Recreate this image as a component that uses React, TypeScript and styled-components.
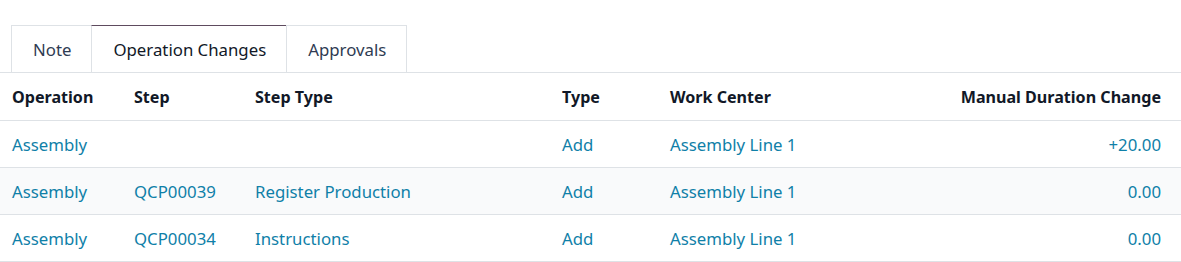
import React from "react";
import styled, { createGlobalStyle } from "styled-components";

const Global = createGlobalStyle`
  html, body { margin: 0; padding: 0; background: #fff; }
  body { font-family: "Noto Sans", "Open Sans", sans-serif; }
`;

const Page = styled.div`
  padding-top: 25px;
  width: 1181px;
`;

const TabList = styled.div`
  display: flex;
  padding-left: 11px;
  border-bottom: 1px solid #dee2e6;
`;

const Tab = styled.div<{ $active?: boolean }>`
  height: 46px;
  padding: 0 20px 0 21px;
  display: flex;
  align-items: center;
  font-size: 16.8px;
  color: ${(p) => (p.$active ? "#111827" : "#2f3b52")};
  border: 1px solid #dee2e6;
  border-top: 1px solid ${(p) => (p.$active ? "#5e4b5f" : "#dee2e6")};
  margin-left: -1px;
  margin-bottom: -1px;
  background: #fff;
  &:first-child { margin-left: 0; }
`;

const Table = styled.table`
  width: 1181px;
  border-collapse: collapse;
  table-layout: fixed;
  font-size: 16.8px;
`;

const Th = styled.th<{ $right?: boolean }>`
  height: 47px;
  padding: 0 ${(p) => (p.$right ? "20px" : "12px")} 0 12px;
  text-align: ${(p) => (p.$right ? "right" : "left")};
  font-weight: 700;
  font-size: 16.1px;
  color: #111827;
  border-bottom: 1px solid #dee2e6;
  white-space: nowrap;
`;

const Row = styled.tr<{ $striped?: boolean }>`
  background: ${(p) => (p.$striped ? "#f9fafb" : "#fff")};
`;

const Td = styled.td<{ $right?: boolean }>`
  height: 46px;
  padding: 0 ${(p) => (p.$right ? "20px" : "12px")} 0 12px;
  text-align: ${(p) => (p.$right ? "right" : "left")};
  color: #0f80a8;
  border-bottom: 1px solid #dee2e6;
  white-space: nowrap;
`;

const rows = [
  { op: "Assembly", step: "", type: "", t: "Add", wc: "Assembly Line 1", d: "+20.00" },
  { op: "Assembly", step: "QCP00039", type: "Register Production", t: "Add", wc: "Assembly Line 1", d: "0.00" },
  { op: "Assembly", step: "QCP00034", type: "Instructions", t: "Add", wc: "Assembly Line 1", d: "0.00" },
];

export default function App() {
  return (
    <Page>
      <Global />
      <TabList>
        <Tab>Note</Tab>
        <Tab $active>Operation Changes</Tab>
        <Tab>Approvals</Tab>
      </TabList>
      <Table>
        <colgroup>
          <col style={{ width: 122 }} />
          <col style={{ width: 121 }} />
          <col style={{ width: 307 }} />
          <col style={{ width: 108 }} />
          <col style={{ width: 250 }} />
          <col />
        </colgroup>
        <thead>
          <tr>
            <Th>Operation</Th>
            <Th>Step</Th>
            <Th>Step Type</Th>
            <Th>Type</Th>
            <Th>Work Center</Th>
            <Th $right>Manual Duration Change</Th>
          </tr>
        </thead>
        <tbody>
          {rows.map((r, i) => (
            <Row key={i} $striped={i === 1}>
              <Td>{r.op}</Td>
              <Td>{r.step}</Td>
              <Td>{r.type}</Td>
              <Td>{r.t}</Td>
              <Td>{r.wc}</Td>
              <Td $right>{r.d}</Td>
            </Row>
          ))}
        </tbody>
      </Table>
    </Page>
  );
}
